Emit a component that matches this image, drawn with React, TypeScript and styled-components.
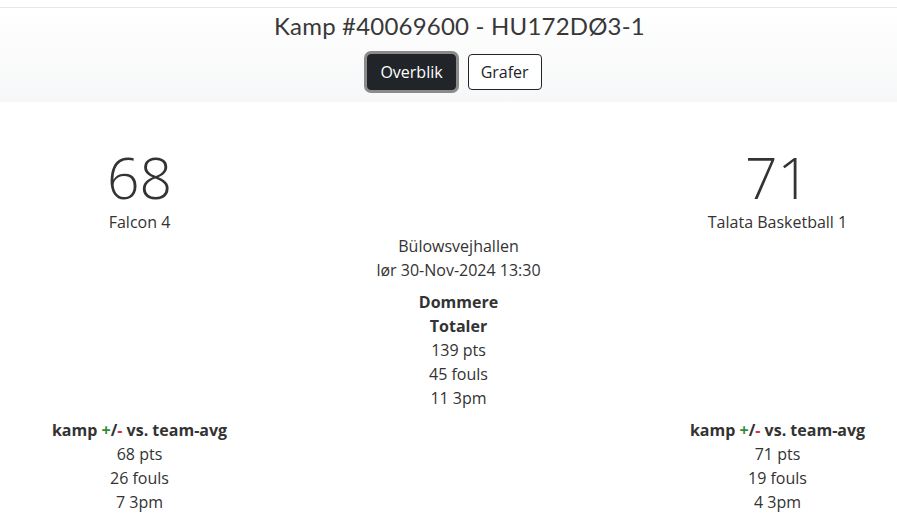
import { createGlobalStyle, styled } from "styled-components"

const GlobalStyle = createGlobalStyle`
  html, body {
    margin: 0;
    padding: 0;
    background: #ffffff;
  }
  body {
    font-family: "Open Sans", "DejaVu Sans", sans-serif;
    font-size: 16px;
    line-height: 24px;
    color: #333333;
  }
`

type TeamStats = {
    score: number
    name: string
    pts: number
    fouls: number
    threes: number
}

const home: TeamStats = { score: 68, name: "Falcon 4", pts: 68, fouls: 26, threes: 7 }
const away: TeamStats = { score: 71, name: "Talata Basketball 1", pts: 71, fouls: 19, threes: 4 }

const Compare = (props: { team: TeamStats }) => {
    return (
        <Cell>
            <Bold>
                kamp <Plus>+</Plus>/<Minus>-</Minus> vs. team-avg
            </Bold>
            <div>{props.team.pts} pts</div>
            <div>{props.team.fouls} fouls</div>
            <div>{props.team.threes} 3pm</div>
        </Cell>
    )
}

export default function App() {
    return (
        <Page>
            <GlobalStyle />
            <Header>
                <Title>Kamp #40069600 - HU172DØ3-1</Title>
                <Tabs>
                    <TabButton active>Overblik</TabButton>
                    <TabButton>Grafer</TabButton>
                </Tabs>
            </Header>

            <Row>
                <Cell>
                    <Score>{home.score}</Score>
                    <div>{home.name}</div>
                </Cell>
                <Cell />
                <Cell>
                    <Score>{away.score}</Score>
                    <div>{away.name}</div>
                </Cell>
            </Row>

            <Info>
                <div>Bülowsvejhallen</div>
                <div>lør 30-Nov-2024 13:30</div>
            </Info>
            <Info>
                <Bold>Dommere</Bold>
                <Bold>Totaler</Bold>
                <div>139 pts</div>
                <div>45 fouls</div>
                <div>11 3pm</div>
            </Info>

            <Row>
                <Compare team={home} />
                <Cell />
                <Compare team={away} />
            </Row>
        </Page>
    )
}

const Page = styled.div`
  padding-top: 7px;
`

const Header = styled.div`
  border-top: 1px solid #e3e8ec;
  background: linear-gradient(to bottom, #ffffff 0%, #f6f7f8 100%);
  height: 94px;
  padding-left: 22px;
  display: flex;
  flex-direction: column;
  align-items: center;
`

const Title = styled.h1`
  margin: 4px 0 0 0;
  font-family: "Lato", "Open Sans", sans-serif;
  font-weight: 400;
  font-size: 24px;
  letter-spacing: 0.2px;
  line-height: 28px;
  color: #383838;
`

const Tabs = styled.div`
  display: flex;
  gap: 12px;
  margin-top: 14px;
  margin-left: -10px;
`

type TabProps = {
    active?: boolean
}

const TabButton = styled.button<TabProps>`
  height: 36px;
  padding: 0 12px;
  font-family: "Open Sans", sans-serif;
  font-size: 16px;
  line-height: 24px;
  border-radius: 4px;
  border: 1px solid #212529;
  background: ${props => props.active ? "#212529" : "#ffffff"};
  color: ${props => props.active ? "#ffffff" : "#212529"};
  box-shadow: ${props => props.active ? "0 0 0 3px #8b8b8b" : "none"};
  cursor: pointer;
`

const Row = styled.div`
  display: grid;
  grid-template-columns: repeat(3, 1fr);
  gap: 80px;
  padding-left: 20px;
`

const Cell = styled.div`
  display: flex;
  flex-direction: column;
  align-items: center;
  text-align: center;
`

const Score = styled.div`
  margin-top: 45px;
  font-size: 57px;
  font-weight: 300;
  line-height: 60px;
  margin-bottom: 3px;
  color: #333333;
`

const Info = styled.div`
  display: flex;
  flex-direction: column;
  align-items: center;
  margin-bottom: 8px;
  padding-left: 20px;
`

const Bold = styled.div`
  font-weight: 700;
`

const Plus = styled.span`
  color: #2e8b3e;
`

const Minus = styled.span`
  color: #d9303c;
`
